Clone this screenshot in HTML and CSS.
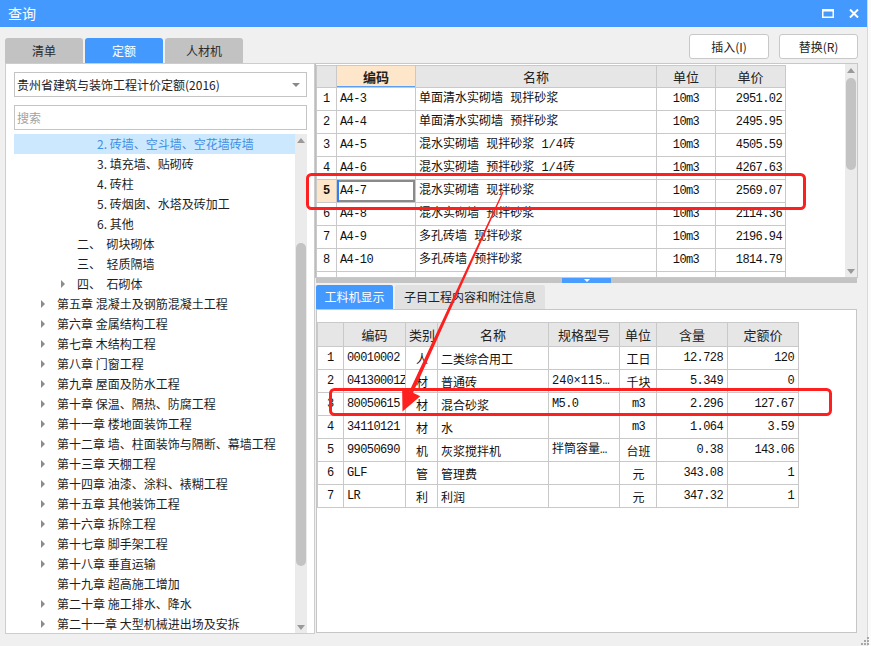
FILE: index.html
```html
<!DOCTYPE html>
<html lang="zh-CN">
<head>
<meta charset="utf-8">
<title>查询</title>
<link rel="stylesheet" href="styles.css">
</head>
<body>
<div class="window">
  <header class="titlebar">
    <span class="title">查询</span>
    <div class="winbtns">
      <svg width="12" height="9" viewBox="0 0 12 9"><rect x="0.75" y="0.75" width="10.5" height="7.5" fill="none" stroke="#fff" stroke-width="1.5"/><rect x="0" y="0" width="12" height="2.5" fill="#fff"/></svg>
      <svg width="10" height="9" viewBox="0 0 10 9"><path d="M1 0.5 L9 8.5 M9 0.5 L1 8.5" stroke="#fff" stroke-width="2"/></svg>
    </div>
  </header>

  <div class="toolbar">
    <div class="tabs">
      <div class="tab">清单</div>
      <div class="tab active">定额</div>
      <div class="tab">人材机</div>
    </div>
    <div class="actions">
      <button class="btn b1">插入(I)</button>
      <button class="btn b2">替换(R)</button>
    </div>
  </div>

  <div class="main">
    <aside class="left">
      <div class="select"><span>贵州省建筑与装饰工程计价定额(2016)</span><i class="caret"></i></div>
      <div class="search">搜索</div>
      <div class="treebox">
        <ul class="tree">
          <li class="l2 sel"><span class="tg"></span>2. 砖墙、空斗墙、空花墙砖墙</li>
          <li class="l2"><span class="tg"></span>3. 填充墙、贴砌砖</li>
          <li class="l2"><span class="tg"></span>4. 砖柱</li>
          <li class="l2"><span class="tg"></span>5. 砖烟囱、水塔及砖加工</li>
          <li class="l2"><span class="tg"></span>6. 其他</li>
          <li class="l1"><span class="tg"></span>二、&nbsp; 砌块砌体</li>
          <li class="l1"><span class="tg"></span>三、&nbsp; 轻质隔墙</li>
          <li class="l1"><span class="tg arrow"></span>四、&nbsp; 石砌体</li>
          <li class="l0"><span class="tg arrow"></span>第五章 混凝土及钢筋混凝土工程</li>
          <li class="l0"><span class="tg arrow"></span>第六章 金属结构工程</li>
          <li class="l0"><span class="tg arrow"></span>第七章 木结构工程</li>
          <li class="l0"><span class="tg arrow"></span>第八章 门窗工程</li>
          <li class="l0"><span class="tg arrow"></span>第九章 屋面及防水工程</li>
          <li class="l0"><span class="tg arrow"></span>第十章 保温、隔热、防腐工程</li>
          <li class="l0"><span class="tg arrow"></span>第十一章 楼地面装饰工程</li>
          <li class="l0"><span class="tg arrow"></span>第十二章 墙、柱面装饰与隔断、幕墙工程</li>
          <li class="l0"><span class="tg arrow"></span>第十三章 天棚工程</li>
          <li class="l0"><span class="tg arrow"></span>第十四章 油漆、涂料、裱糊工程</li>
          <li class="l0"><span class="tg arrow"></span>第十五章 其他装饰工程</li>
          <li class="l0"><span class="tg arrow"></span>第十六章 拆除工程</li>
          <li class="l0"><span class="tg arrow"></span>第十七章 脚手架工程</li>
          <li class="l0"><span class="tg arrow"></span>第十八章 垂直运输</li>
          <li class="l0"><span class="tg"></span>第十九章 超高施工增加</li>
          <li class="l0"><span class="tg arrow"></span>第二十章 施工排水、降水</li>
          <li class="l0"><span class="tg arrow"></span>第二十一章 大型机械进出场及安拆</li>
        </ul>
        <div class="vscroll tree-scroll">
          <div class="sb-btn"><i class="up"></i></div>
          <div class="sb-track"><div class="thumb"></div></div>
          <div class="sb-btn"><i class="down"></i></div>
        </div>
      </div>
    </aside>

    <section class="right">
      <div class="top-panel">
        <div class="grid-area">
          <table class="grid top-grid">
            <colgroup><col class="c-rn"><col class="c-code"><col class="c-name"><col class="c-unit"><col class="c-price"></colgroup>
            <thead>
              <tr><th></th><th class="hl">编码</th><th>名称</th><th>单位</th><th>单价</th></tr>
            </thead>
            <tbody>
              <tr><td class="rn">1</td><td class="mono">A4-3</td><td class="mix">单面清水实砌墙 现拌砂浆</td><td class="mono ctr">10m3</td><td class="mono rt">2951.02</td></tr>
              <tr><td class="rn">2</td><td class="mono">A4-4</td><td class="mix">单面清水实砌墙 预拌砂浆</td><td class="mono ctr">10m3</td><td class="mono rt">2495.95</td></tr>
              <tr><td class="rn">3</td><td class="mono">A4-5</td><td class="mix">混水实砌墙 现拌砂浆 1/4砖</td><td class="mono ctr">10m3</td><td class="mono rt">4505.59</td></tr>
              <tr><td class="rn">4</td><td class="mono">A4-6</td><td class="mix">混水实砌墙 预拌砂浆 1/4砖</td><td class="mono ctr">10m3</td><td class="mono rt">4267.63</td></tr>
              <tr><td class="rn cur">5</td><td class="mono selcell">A4-7</td><td class="mix">混水实砌墙 现拌砂浆</td><td class="mono ctr">10m3</td><td class="mono rt">2569.07</td></tr>
              <tr><td class="rn">6</td><td class="mono">A4-8</td><td class="mix">混水实砌墙 预拌砂浆</td><td class="mono ctr">10m3</td><td class="mono rt">2114.36</td></tr>
              <tr><td class="rn">7</td><td class="mono">A4-9</td><td class="mix">多孔砖墙 现拌砂浆</td><td class="mono ctr">10m3</td><td class="mono rt">2196.94</td></tr>
              <tr><td class="rn">8</td><td class="mono">A4-10</td><td class="mix">多孔砖墙 预拌砂浆</td><td class="mono ctr">10m3</td><td class="mono rt">1814.79</td></tr>
              <tr><td class="rn"></td><td></td><td></td><td></td><td></td></tr>
            </tbody>
          </table>
        </div>
        <div class="vscroll top-scroll">
          <div class="sb-btn"><i class="up"></i></div>
          <div class="sb-track"><div class="thumb"></div></div>
          <div class="sb-btn"><i class="down"></i></div>
        </div>
      </div>

      <div class="splitter"><span class="split-handle"><i></i></span></div>

      <div class="subtabs">
        <div class="subtab active">工料机显示</div>
        <div class="subtab">子目工程内容和附注信息</div>
      </div>

      <div class="bottom-panel">
        <table class="grid bottom-grid">
          <colgroup><col class="d-rn"><col class="d-code"><col class="d-type"><col class="d-name"><col class="d-spec"><col class="d-unit"><col class="d-qty"><col class="d-price"></colgroup>
          <thead>
            <tr><th></th><th>编码</th><th>类别</th><th>名称</th><th>规格型号</th><th>单位</th><th>含量</th><th>定额价</th></tr>
          </thead>
          <tbody>
            <tr><td class="rn">1</td><td class="mono">00010002</td><td class="ctr">人</td><td>二类综合用工</td><td class="mix"></td><td class="ctr">工日</td><td class="mono rt">12.728</td><td class="mono rt">120</td></tr>
            <tr><td class="rn">2</td><td class="mono">04130001Z</td><td class="ctr">材</td><td>普通砖</td><td class="mix">240×115…</td><td class="ctr">千块</td><td class="mono rt">5.349</td><td class="mono rt">0</td></tr>
            <tr><td class="rn">3</td><td class="mono">80050615</td><td class="ctr">材</td><td>混合砂浆</td><td class="mono">M5.0</td><td class="mono ctr">m3</td><td class="mono rt">2.296</td><td class="mono rt">127.67</td></tr>
            <tr><td class="rn">4</td><td class="mono">34110121</td><td class="ctr">材</td><td>水</td><td></td><td class="mono ctr">m3</td><td class="mono rt">1.064</td><td class="mono rt">3.59</td></tr>
            <tr><td class="rn">5</td><td class="mono">99050690</td><td class="ctr">机</td><td>灰浆搅拌机</td><td class="mix">拌筒容量…</td><td class="ctr">台班</td><td class="mono rt">0.38</td><td class="mono rt">143.06</td></tr>
            <tr><td class="rn">6</td><td class="mono">GLF</td><td class="ctr">管</td><td>管理费</td><td></td><td class="ctr">元</td><td class="mono rt">343.08</td><td class="mono rt">1</td></tr>
            <tr><td class="rn">7</td><td class="mono">LR</td><td class="ctr">利</td><td>利润</td><td></td><td class="ctr">元</td><td class="mono rt">347.32</td><td class="mono rt">1</td></tr>
          </tbody>
        </table>
      </div>
    </section>
  </div>
</div>

<svg class="annot" width="871" height="646" viewBox="0 0 871 646">
  <rect x="307.5" y="174.5" width="497" height="34" rx="4" fill="none" stroke="#fe1f1f" stroke-width="3"/>
  <rect x="330.5" y="389.5" width="500" height="25" rx="4" fill="none" stroke="#fe1f1f" stroke-width="3"/>
  <polygon points="503.55,192.25 413.0,392.8 420.3,396.2 402.5,411.5 402.1,387.8 409.4,391.2 502.45,191.75" fill="#fe1f1f"/>
</svg>
<svg class="grip" width="8" height="8" viewBox="0 0 8 8">
  <rect x="6" y="0" width="2" height="2" fill="#a8a8a8"/>
  <rect x="3" y="3" width="2" height="2" fill="#a8a8a8"/><rect x="6" y="3" width="2" height="2" fill="#a8a8a8"/>
  <rect x="0" y="6" width="2" height="2" fill="#a8a8a8"/><rect x="3" y="6" width="2" height="2" fill="#a8a8a8"/><rect x="6" y="6" width="2" height="2" fill="#a8a8a8"/>
</svg>
</body>
</html>
```

FILE: styles.css
```css
* { box-sizing: border-box; }
html, body { margin: 0; padding: 0; }
body {
  width: 871px;
  height: 646px;
  overflow: hidden;
  position: relative;
  background: #fbfbfb;
  font-family: "Noto Sans CJK SC", "Microsoft YaHei", sans-serif;
  color: #222;
}
.window {
  width: 868px;
  height: 646px;
  background: #f0f0f0;
  border-right: 1px solid #d8d8d8;
  display: flex;
  flex-direction: column;
}

/* title bar */
.titlebar {
  height: 27px;
  flex: none;
  background: #4499ff;
  display: flex;
  align-items: center;
  justify-content: space-between;
  padding: 0 8px 0 8px;
  color: #fff;
}
.title { font-size: 14px; line-height: 27px; }
.winbtns { display: flex; align-items: center; gap: 15px; }
.winbtns svg { display: block; }

/* toolbar */
.toolbar {
  height: 36px;
  flex: none;
  display: flex;
  justify-content: space-between;
  padding: 0 9px 0 5px;
}
.tabs { display: flex; align-self: flex-end; gap: 2px; }
.tab {
  width: 78px;
  height: 25px;
  background: #c2c2c2;
  border-radius: 3px 3px 0 0;
  font-size: 12px;
  line-height: 25px;
  text-align: center;
  color: #2a2a2a;
}
.tab.active { background: #4499ff; color: #fff; }
.actions { display: flex; gap: 10px; padding-top: 7px; }
.btn {
  height: 25px;
  background: #fff;
  border: 1px solid #c8c8c8;
  border-radius: 3px;
  font-family: "Noto Sans CJK SC", sans-serif;
  font-size: 12px;
  color: #222;
  padding: 0;
}
.b1 { width: 80px; }
.b2 { width: 79px; }

/* main */
.main { display: flex; flex: none; height: 571px; padding-left: 5px; }

.left {
  width: 310px;
  height: 571px;
  background: #fff;
  border: 1px solid #cdcdcd;
  padding: 8px 7px 0 8px;
  display: flex;
  flex-direction: column;
}
.select, .search {
  height: 25px;
  flex: none;
  border: 1px solid #c4c4c4;
  font-size: 12px;
  line-height: 23px;
  padding-left: 2px;
  position: relative;
  white-space: nowrap;
}
.select { display: flex; justify-content: space-between; align-items: center; padding-right: 6px; }
.caret {
  width: 0; height: 0;
  border-left: 4px solid transparent;
  border-right: 4px solid transparent;
  border-top: 4px solid #8a8a8a;
}
.search { margin-top: 8px; color: #a2a2a2; }

.treebox { flex: 1; display: flex; margin-top: 4px; min-height: 0; overflow: hidden; }
.tree {
  list-style: none;
  margin: 0;
  padding: 0;
  width: 281px;
  flex: none;
  overflow: hidden;
}
.tree li {
  height: 20px;
  line-height: 20px;
  font-size: 12px;
  white-space: nowrap;
  display: flex;
  align-items: center;
  color: #1e1e1e;
}
.tree li.sel { background: #cce8ff; color: #3f8fe3; }
.tree .l0 { padding-left: 24px; }
.tree .l1 { padding-left: 44px; }
.tree .l2 { padding-left: 64px; }
.tg { width: 19px; height: 20px; flex: none; position: relative; }
.tg.arrow::before {
  content: "";
  position: absolute;
  left: 3px;
  top: 6px;
  border-left: 4px solid #8c8c8c;
  border-top: 4px solid transparent;
  border-bottom: 4px solid transparent;
}

/* scrollbars */
.vscroll { width: 12px; flex: none; display: flex; flex-direction: column; background: #ebebeb; }
.sb-btn { height: 12px; flex: none; display: flex; align-items: center; justify-content: center; }
.sb-track { flex: 1; position: relative; }
.thumb { background: #c3c3c3; border-radius: 5px; margin: 0 1px; }
.up { width: 0; height: 0; border-left: 4px solid transparent; border-right: 4px solid transparent; border-bottom: 5px solid #9a9a9a; }
.down { width: 0; height: 0; border-left: 4px solid transparent; border-right: 4px solid transparent; border-top: 5px solid #9a9a9a; }
.tree-scroll .thumb { margin-top: 97px; height: 323px; }
.top-scroll .thumb { margin-top: 2px; height: 92px; }

/* right side */
.right { width: 543px; display: flex; flex-direction: column; }
.top-panel {
  height: 215px;
  flex: none;
  border: 1px solid #c8c8c8;
  border-left-color: #bdbdbd;
  display: flex;
  background: #fff;
}
.grid-area { flex: 1; padding-top: 1px; overflow: hidden; }

.grid { border-collapse: collapse; table-layout: fixed; background: #fff; }
.grid th, .grid td {
  border: 1px solid #c9c9c9;
  padding: 0 3px;
  font-size: 12px;
  font-weight: normal;
  color: #111;
  white-space: nowrap;
  overflow: hidden;
  text-align: left;
}
.grid th {
  background: #e6e6e6;
  font-size: 13px;
  text-align: center;
  color: #222;
}
.grid td { height: 23px; line-height: 21px; }
.top-grid th { height: 22px; line-height: 20px; }
.bottom-grid th { height: 24px; line-height: 22px; }

.top-grid { width: 469px; }
.c-rn { width: 20px; }
.c-code { width: 79px; }
.c-name { width: 241px; }
.c-unit { width: 59px; }
.c-price { width: 70px; }
.top-grid th.hl { background: #fde6c9; font-weight: bold; box-shadow: inset 0 -1px 0 #5b9ef7; }

.mono {
  font-family: "Liberation Mono", "Noto Sans CJK SC", monospace;
  font-size: 11px;
  letter-spacing: -0.6px;
}
.mix { font-family: "Liberation Mono", "Noto Sans CJK SC", monospace; font-size: 12px; }
.ctr { text-align: center !important; }
.rt { text-align: right !important; }
.grid td.rn {
  text-align: center;
  font-family: "Liberation Mono", monospace;
  font-size: 12px;
  padding: 0;
}
.grid td.rn.cur { background: #fde6c9; font-weight: bold; }
.grid td.selcell { box-shadow: inset 2px 0 0 #2f80f5, inset 0 0 0 2px #8a8a8a; }

.splitter {
  height: 5px;
  flex: none;
  margin-left: 1px;
  margin-right: 1px;
  background: #c4c4c4;
  display: flex;
}
.split-handle {
  margin-left: 246px;
  width: 49px;
  height: 5px;
  background: #4a9cff;
  display: flex;
  justify-content: center;
  align-items: flex-start;
  padding-top: 1px;
}
.split-handle i { width: 0; height: 0; border-left: 3px solid transparent; border-right: 3px solid transparent; border-top: 3px solid #fff; }

.subtabs { display: flex; gap: 2px; margin-top: 2px; padding-left: 1px; height: 24px; flex: none; }
.subtab {
  height: 24px;
  padding: 0;
  background: #e1e1e1;
  font-size: 12px;
  line-height: 24px;
  text-align: center;
  color: #222;
  border-radius: 2px 2px 0 0;
  width: 150px;
}
.subtab.active { width: 77px; background: #4499ff; color: #fff; }

.bottom-panel {
  height: 324px;
  flex: none;
  margin-left: 1px;
  margin-right: 1px;
  background: #fff;
  border: 1px solid #c6c6c6;
  padding-top: 12px;
}
.bottom-grid { width: 481px; }
.d-rn { width: 26px; }
.d-code { width: 62px; }
.d-type { width: 32px; }
.d-name { width: 111px; }
.d-spec { width: 71px; }
.d-unit { width: 37px; }
.d-qty { width: 71px; }
.d-price { width: 71px; }
.bottom-grid td { padding: 0 2px 0 3px; }
.bottom-grid td.rt { padding-right: 4px; }

/* overlays */
.annot { position: absolute; left: 0; top: 0; pointer-events: none; }
.grip { position: absolute; left: 861px; top: 637px; }
```
